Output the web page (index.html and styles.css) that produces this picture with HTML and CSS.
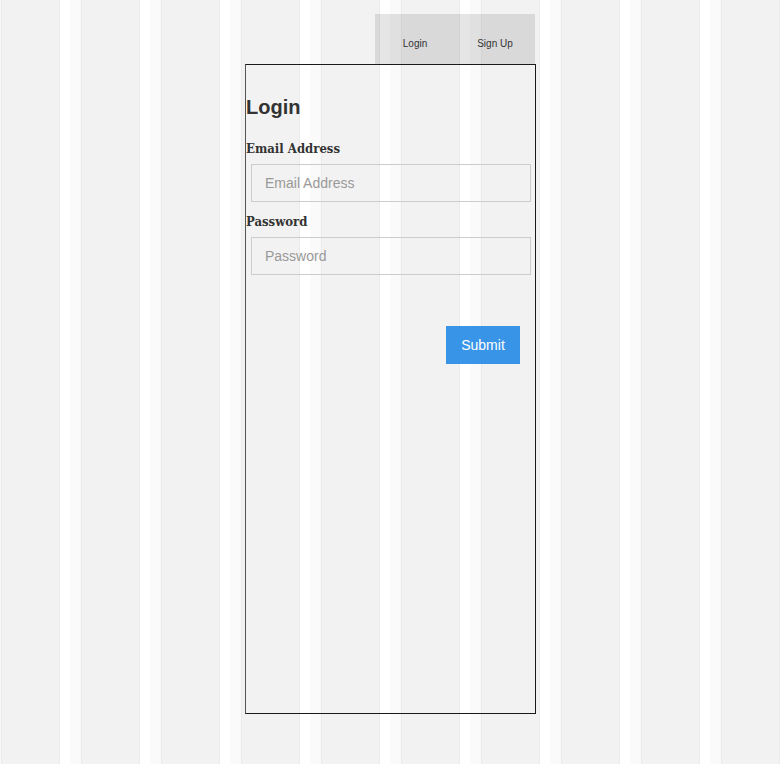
FILE: index.html
```html
<!DOCTYPE html>
<html lang="en">
<head>
<meta charset="utf-8">
<title>Login</title>
<link rel="stylesheet" href="styles.css">
</head>
<body>
<div class="page">
  <nav class="nav">
    <a class="nav-link" href="#">Login</a>
    <a class="nav-link" href="#">Sign Up</a>
  </nav>
  <form class="card">
    <h1 class="title">Login</h1>
    <label class="label" for="email">Email Address</label>
    <input class="field" id="email" type="email" placeholder="Email Address">
    <label class="label" for="password">Password</label>
    <input class="field" id="password" type="password" placeholder="Password">
    <div class="actions">
      <button class="submit" type="button">Submit</button>
    </div>
  </form>
</div>
</body>
</html>
```

FILE: styles.css
```css
html, body {
  margin: 0;
  padding: 0;
}
body {
  min-height: 764px;
  font-family: "Liberation Sans", Arial, sans-serif;
  color: #333;
  background-color: #fff;
  background-image: repeating-linear-gradient(
    to right,
    #f9f9f9 0px, #f9f9f9 1px,
    #ebebeb 1px, #ebebeb 2px,
    #f2f2f2 2px, #f2f2f2 59px,
    #ebebeb 59px, #ebebeb 60px,
    #ffffff 60px, #ffffff 70px,
    #fafafa 70px, #fafafa 80px
  );
}
.page {
  width: 291px;
  margin: 0 auto;
  padding-top: 14px;
  display: flex;
  flex-direction: column;
  align-items: flex-end;
}
.nav {
  display: flex;
  width: 160px;
  height: 50px;
  margin-right: 1px;
  background: rgba(0, 0, 0, 0.1);
}
.nav-link {
  flex: 1;
  display: flex;
  align-items: center;
  justify-content: center;
  padding-top: 9px;
  font-size: 10px;
  color: #333;
  text-decoration: none;
}
.card {
  box-sizing: border-box;
  width: 291px;
  height: 650px;
  border: 1px solid #1a1a1a;
  border-left-color: #555;
  display: flex;
  flex-direction: column;
  align-self: stretch;
}
.title {
  margin: 30px 0 19px 0;
  font-size: 20px;
  line-height: 24px;
  font-weight: bold;
  color: #333;
}
.label {
  font-family: "DejaVu Serif Condensed", "DejaVu Serif", serif;
  font-weight: bold;
  font-size: 13px;
  line-height: 20px;
  color: #333;
  padding-top: 1px;
  margin-bottom: 5px;
}
.field {
  box-sizing: border-box;
  width: 280px;
  height: 38px;
  margin: 0 0 9px 5px;
  padding: 0 13px;
  border: 1px solid #ccc;
  background: transparent;
  font-family: "Liberation Sans", Arial, sans-serif;
  font-size: 14px;
  color: #333;
  outline: none;
}
.field::placeholder {
  color: #999;
}
.actions {
  display: flex;
  justify-content: flex-end;
  padding: 42px 15px 0 0;
}
.submit {
  width: 74px;
  height: 38px;
  border: 0;
  background: rgba(30, 134, 228, 0.88);
  color: #fff;
  font-family: "Liberation Sans", Arial, sans-serif;
  font-size: 14px;
  padding: 0;
}
```
